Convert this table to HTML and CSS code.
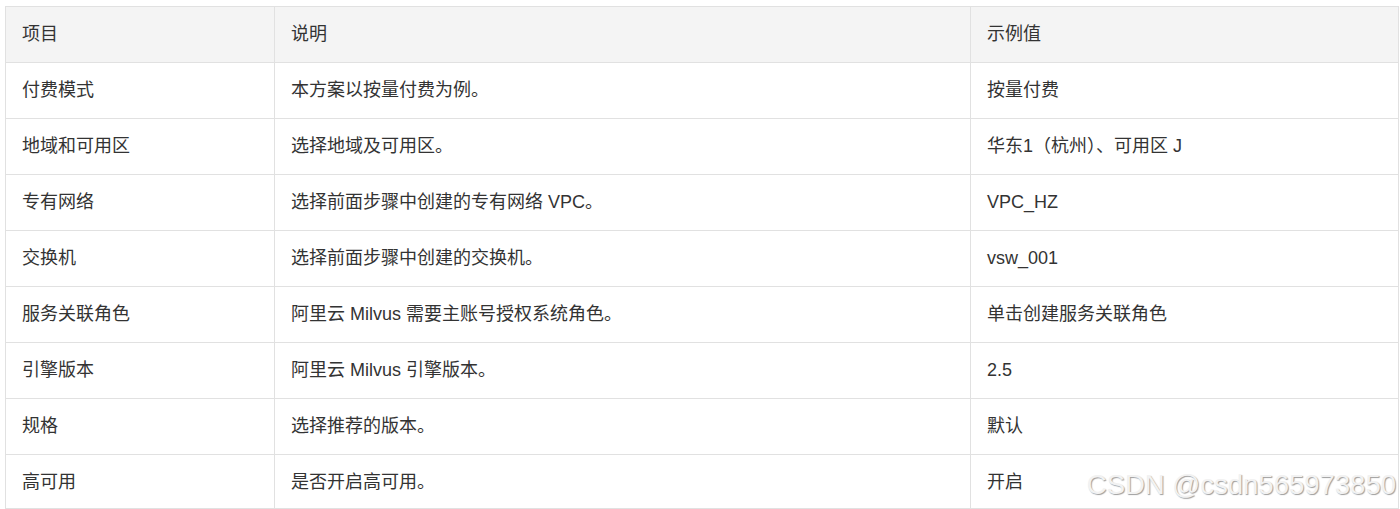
FILE: index.html
```html
<!DOCTYPE html>
<html lang="zh-CN">
<head>
    <meta charset="UTF-8">
    <meta name="viewport" content="width=device-width, initial-scale=1.0">
    <title>Milvus 实例配置</title>
    <link rel="stylesheet" href="styles.css">
</head>
<body>

<div class="wrap">
    <!-- 实例配置参数 -->
    <table class="params">
        <colgroup>
            <col class="col-item">
            <col class="col-desc">
            <col class="col-value">
        </colgroup>
        <thead>
            <tr>
                <th>项目</th>
                <th>说明</th>
                <th>示例值</th>
            </tr>
        </thead>
        <tbody>
            <tr>
                <td>付费模式</td>
                <td>本方案以按量付费为例。</td>
                <td>按量付费</td>
            </tr>
            <tr>
                <td>地域和可用区</td>
                <td>选择地域及可用区。</td>
                <td>华东1（杭州）、可用区 J</td>
            </tr>
            <tr>
                <td>专有网络</td>
                <td>选择前面步骤中创建的专有网络 VPC。</td>
                <td>VPC_HZ</td>
            </tr>
            <tr>
                <td>交换机</td>
                <td>选择前面步骤中创建的交换机。</td>
                <td>vsw_001</td>
            </tr>
            <tr>
                <td>服务关联角色</td>
                <td>阿里云 Milvus 需要主账号授权系统角色。</td>
                <td>单击创建服务关联角色</td>
            </tr>
            <tr>
                <td>引擎版本</td>
                <td>阿里云 Milvus 引擎版本。</td>
                <td>2.5</td>
            </tr>
            <tr>
                <td>规格</td>
                <td>选择推荐的版本。</td>
                <td>默认</td>
            </tr>
            <tr>
                <td>高可用</td>
                <td>是否开启高可用。</td>
                <td>开启</td>
            </tr>
        </tbody>
    </table>

    <div class="watermark">CSDN @csdn565973850</div>
</div>

</body>
</html>
```

FILE: styles.css
```css
body {
    font-family: "Liberation Sans", "Noto Sans CJK SC", sans-serif;
    background-color: #fff;
    color: #333;
    margin: 0;
}

.wrap {
    position: relative;
    padding: 6px 0 0 5px;
}

.params {
    width: 1394px;
    border-collapse: collapse;
    table-layout: fixed;
    font-size: 18px;
}

.col-item {
    width: 269px;
}

.col-desc {
    width: 696px;
}

.params th,
.params td {
    border: 1px solid #e1e1e1;
    padding: 16px 16px;
    line-height: 23px;
    text-align: left;
    font-weight: normal;
    white-space: nowrap;
}

.params thead th {
    background-color: #f4f4f4;
}

.params tbody tr:last-child td {
    padding-bottom: 14px;
}

.watermark {
    position: absolute;
    right: 4px;
    bottom: 9px;
    font-family: "Liberation Sans", sans-serif;
    font-size: 27.5px;
    line-height: 30px;
    color: #f2f2f2;
    text-shadow: 1px 1px 1px #9e9e9e;
}
```
